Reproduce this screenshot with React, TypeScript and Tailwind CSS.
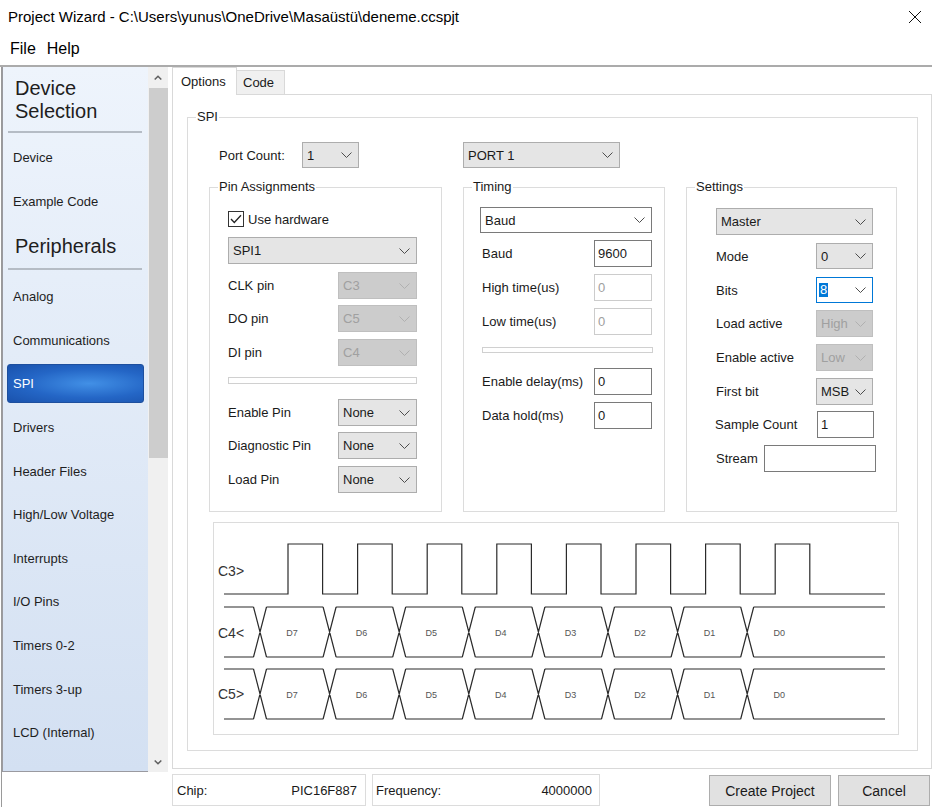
import React from "react";

type SelVariant = "normal" | "disabled" | "white" | "focus";

function Chevron({ light }: { light?: boolean }) {
  return (
    <svg width="11" height="6" viewBox="0 0 11 6" className="shrink-0 block">
      <path d="M0.5 0.5 L5.5 5.5 L10.5 0.5" fill="none" stroke={light ? "#b0b0b0" : "#4d4d4d"} strokeWidth="1" />
    </svg>
  );
}

function Select({ value, className = "", variant = "normal" }: { value: React.ReactNode; className?: string; variant?: SelVariant }) {
  const v =
    variant === "disabled"
      ? "bg-[#cccccc] border-[#bfbfbf] text-[#a0a0a0] pl-[4px]"
      : variant === "white"
      ? "bg-white border-[#7a7a7a] text-[#1a1a1a] pl-[4px]"
      : variant === "focus"
      ? "bg-white border-[#0078d7] text-[#1a1a1a] pl-[2px]"
      : "bg-[#e5e5e5] border-[#adadad] text-[#1a1a1a] pl-[4px]";
  return (
    <div className={`flex items-center justify-between border pr-[6px] text-[13px] leading-none shrink-0 ${v} ${className}`}>
      <span>{value}</span>
      <Chevron light={variant === "disabled"} />
    </div>
  );
}

function Input({ value, className = "", disabled }: { value: string; className?: string; disabled?: boolean }) {
  return (
    <div
      className={`flex items-center border pl-[3px] text-[13px] leading-none shrink-0 bg-white ${
        disabled ? "border-[#cccccc] text-[#a0a0a0]" : "border-[#7a7a7a] text-[#1a1a1a]"
      } ${className}`}
    >
      {value}
    </div>
  );
}

function Group({ label, className = "", children }: { label: string; className?: string; children?: React.ReactNode }) {
  return (
    <div className={`relative border border-[#dcdcdc] shrink-0 ${className}`}>
      <span className="absolute left-[8px] -top-[9px] px-[1px] bg-white text-[13px] leading-[16px] text-[#1a1a1a]">{label}</span>
      {children}
    </div>
  );
}

function Row({ label, labelW, className = "", children }: { label: string; labelW: string; className?: string; children?: React.ReactNode }) {
  return (
    <div className={`flex items-center ${className}`}>
      <span className={`${labelW} text-[13px] leading-none text-[#1a1a1a] shrink-0 whitespace-nowrap`}>{label}</span>
      {children}
    </div>
  );
}

function Waveform() {
  const rises = Array.from({ length: 8 }, (_, k) => 288 + 69.6 * k);
  let clk = "M224 594";
  rises.forEach((r) => {
    clk += ` L${r} 594 L${r} 544 L${r + 34.6} 544 L${r + 34.6} 594`;
  });
  clk += " L885 594";
  const cs = Array.from({ length: 8 }, (_, k) => 260 + 69.6 * k);
  const h = 6.5;
  const bus = (t: number, b: number) => {
    let d = "";
    const xs = [224, ...cs.flatMap((c) => [c - h, c + h]), 885];
    for (let i = 0; i < xs.length; i += 2) {
      d += ` M${xs[i]} ${t} L${xs[i + 1]} ${t} M${xs[i]} ${b} L${xs[i + 1]} ${b}`;
    }
    cs.forEach((c) => {
      d += ` M${c - h} ${t} L${c + h} ${b} M${c - h} ${b} L${c + h} ${t}`;
    });
    return d;
  };
  const names = ["D7", "D6", "D5", "D4", "D3", "D2", "D1", "D0"];
  return (
    <svg width="684" height="211" viewBox="214 523 684 211" className="block">
      <g fontFamily="'Liberation Sans', Arial, sans-serif" fontSize="14" fill="#333">
        <text x="218" y="576">{"C3>"}</text>
        <text x="218" y="638">{"C4<"}</text>
        <text x="218" y="699">{"C5>"}</text>
      </g>
      <path d={clk} fill="none" stroke="#2b2b2b" strokeWidth="1.2" />
      <path d={bus(607, 657)} fill="none" stroke="#2b2b2b" strokeWidth="1.2" />
      <path d={bus(669, 719)} fill="none" stroke="#2b2b2b" strokeWidth="1.2" />
      <g fontFamily="'Liberation Sans', Arial, sans-serif" fontSize="9" fill="#555" textAnchor="middle">
        {cs.map((c, i) => (
          <text key={"a" + i} x={c + 32} y="635.5">
            {names[i]}
          </text>
        ))}
        {cs.map((c, i) => (
          <text key={"b" + i} x={c + 32} y="697.5">
            {names[i]}
          </text>
        ))}
      </g>
    </svg>
  );
}

function SideItem({ text, active }: { text: string; active?: boolean }) {
  return (
    <div className="h-[43.6px] shrink-0">
      {active ? (
        <div className="ml-[4px] w-[137px] h-[39px] rounded-[3px] border border-[#1d4f9e] bg-[radial-gradient(ellipse_at_60%_50%,#4290e6_0%,#2466c6_55%,#1a52ac_100%)] flex items-center pl-[5px] text-white text-[13px]">
          {text}
        </div>
      ) : (
        <div className="h-[40px] flex items-center pl-[10px] text-[13px] text-[#1e1e1e] whitespace-nowrap">{text}</div>
      )}
    </div>
  );
}

export default function App() {
  const items2 = [
    "Analog",
    "Communications",
    "SPI",
    "Drivers",
    "Header Files",
    "High/Low Voltage",
    "Interrupts",
    "I/O Pins",
    "Timers 0-2",
    "Timers 3-up",
    "LCD (Internal)",
    "LCD (External)",
  ];
  return (
    <div className="w-[932px] h-[807px] bg-white overflow-hidden flex flex-col font-['Liberation_Sans',Arial,sans-serif] text-[#1a1a1a]">
      {/* Title bar */}
      <div className="h-[33px] shrink-0 flex items-center pl-[8px] pr-[10px]">
        <span className="text-[15px] leading-none text-black whitespace-nowrap">
          {"Project Wizard - C:\\Users\\yunus\\OneDrive\\Masaüstü\\deneme.ccspjt"}
        </span>
        <svg width="14" height="14" viewBox="0 0 14 14" className="ml-auto block">
          <path d="M1 1 L13 13 M13 1 L1 13" stroke="#111" strokeWidth="1" fill="none" />
        </svg>
      </div>
      {/* Menu */}
      <div className="h-[32px] shrink-0 flex items-center pl-[10px] gap-[11px] text-[16px] leading-none text-black">
        <span>File</span>
        <span>Help</span>
      </div>
      {/* Body */}
      <div className="h-[742px] shrink-0 flex border-t-2 border-[#ababab]">
        {/* Left column */}
        <div className="ml-[1px] w-[171px] shrink-0 border-l border-[#9a9a9a] flex flex-col">
          <div className="h-[705px] flex shrink-0">
            <div className="w-[146px] h-[705px] border-l border-b border-[#9a9aa0] bg-[linear-gradient(to_bottom,#eef4fc,#d3e0f2)] flex flex-col overflow-hidden">
              <div className="pt-[10px] pl-[12px] text-[20px] leading-[22.5px] text-[#1e1e1e] shrink-0">
                Device
                <br />
                Selection
              </div>
              <div className="mt-[9px] ml-[5px] w-[134px] h-[2px] bg-[#b5bcc5] shrink-0" />
              <div className="mt-[5px] flex flex-col shrink-0">
                <SideItem text="Device" />
                <SideItem text="Example Code" />
              </div>
              <div className="mt-[10.3px] pl-[12px] text-[20px] leading-[23px] text-[#1e1e1e] shrink-0">Peripherals</div>
              <div className="mt-[9.5px] ml-[5px] w-[134px] h-[2px] bg-[#b5bcc5] shrink-0" />
              <div className="mt-[7px] flex flex-col shrink-0">
                {items2.map((t) => (
                  <SideItem key={t} text={t} active={t === "SPI"} />
                ))}
              </div>
            </div>
            <div className="w-[20px] h-[705px] bg-[#f0f0f0] flex flex-col shrink-0">
              <div className="h-[21px] flex items-center justify-center shrink-0">
                <svg width="8" height="5" viewBox="0 0 8 5" className="block">
                  <path d="M0.7 4.5 L4 1.2 L7.3 4.5" fill="none" stroke="#606060" strokeWidth="1.5" />
                </svg>
              </div>
              <div className="ml-[1px] w-[19px] h-[370px] bg-[#cdcdcd] shrink-0" />
              <div className="flex-1" />
              <div className="h-[20px] flex items-center justify-center shrink-0">
                <svg width="8" height="5" viewBox="0 0 8 5" className="block">
                  <path d="M0.7 0.5 L4 3.8 L7.3 0.5" fill="none" stroke="#606060" strokeWidth="1.5" />
                </svg>
              </div>
            </div>
          </div>
        </div>
        {/* Main column */}
        <div className="w-[760px] shrink-0 flex flex-col">
          <div className="h-[27px] shrink-0 flex items-end relative z-10">
            <div className="w-[65px] h-[28px] -mb-[1px] bg-white border-t border-l border-r border-[#d9d9d9] flex items-center pl-[8px] text-[13px] leading-none">
              Options
            </div>
            <div className="w-[48px] h-[24px] bg-[#f0f0f0] border-t border-r border-[#d9d9d9] flex items-center pl-[6px] text-[13px] leading-none">
              Code
            </div>
          </div>
          <div className="h-[675px] shrink-0 border border-[#d9d9d9] bg-white">
            <Group label="SPI" className="ml-[14px] mt-[22px] w-[731px] h-[634px]">
              <div className="flex flex-col">
                <div className="flex items-center h-[26px] mt-[24px] ml-[31px]">
                  <span className="w-[83px] text-[13px] leading-none shrink-0">Port Count:</span>
                  <Select value="1" className="w-[57px] h-[26px]" />
                  <Select value="PORT 1" className="w-[157px] h-[26px] ml-[104px]" />
                </div>
                <div className="flex gap-[21px] mt-[19px] ml-[21px]">
                  <Group label="Pin Assignments" className="w-[233px] h-[325px]">
                    <div className="flex flex-col pl-[18px] pt-[23px]">
                      <div className="flex items-center h-[16px]">
                        <div className="w-[16px] h-[16px] border border-[#333] bg-white flex items-center justify-center shrink-0">
                          <svg width="12" height="10" viewBox="0 0 12 10" className="block">
                            <path d="M1 5 L4.3 8.5 L11 1.3" fill="none" stroke="#222" strokeWidth="1.3" />
                          </svg>
                        </div>
                        <span className="ml-[4px] text-[13px] leading-none">Use hardware</span>
                      </div>
                      <Select value="SPI1" className="w-[189px] h-[27px] mt-[10px]" />
                      <Row label="CLK pin" labelW="w-[110px]" className="mt-[8px]">
                        <Select value="C3" variant="disabled" className="w-[79px] h-[27px]" />
                      </Row>
                      <Row label="DO pin" labelW="w-[110px]" className="mt-[6px]">
                        <Select value="C5" variant="disabled" className="w-[79px] h-[27px]" />
                      </Row>
                      <Row label="DI pin" labelW="w-[110px]" className="mt-[7px]">
                        <Select value="C4" variant="disabled" className="w-[79px] h-[27px]" />
                      </Row>
                      <div className="mt-[11px] w-[189px] h-[7px] border border-[#d0d0d0] bg-white" />
                      <Row label="Enable Pin" labelW="w-[110px]" className="mt-[15px]">
                        <Select value="None" className="w-[79px] h-[27px]" />
                      </Row>
                      <Row label="Diagnostic Pin" labelW="w-[110px]" className="mt-[6px]">
                        <Select value="None" className="w-[79px] h-[27px]" />
                      </Row>
                      <Row label="Load Pin" labelW="w-[110px]" className="mt-[7px]">
                        <Select value="None" className="w-[79px] h-[27px]" />
                      </Row>
                    </div>
                  </Group>
                  <Group label="Timing" className="w-[202px] h-[325px]">
                    <div className="flex flex-col pl-[16px] pt-[19px]">
                      <Select value="Baud" variant="white" className="w-[172px] h-[26px]" />
                      <Row label="Baud" labelW="w-[112px]" className="mt-[7px] ml-[2px]">
                        <Input value="9600" className="w-[58px] h-[27px]" />
                      </Row>
                      <Row label="High time(us)" labelW="w-[112px]" className="mt-[7px] ml-[2px]">
                        <Input value="0" disabled className="w-[58px] h-[27px]" />
                      </Row>
                      <Row label="Low time(us)" labelW="w-[112px]" className="mt-[7px] ml-[2px]">
                        <Input value="0" disabled className="w-[58px] h-[27px]" />
                      </Row>
                      <div className="mt-[12px] ml-[2px] w-[171px] h-[6px] border border-[#d0d0d0] bg-white" />
                      <Row label="Enable delay(ms)" labelW="w-[112px]" className="mt-[15px] ml-[2px]">
                        <Input value="0" className="w-[58px] h-[27px]" />
                      </Row>
                      <Row label="Data hold(ms)" labelW="w-[112px]" className="mt-[7px] ml-[2px]">
                        <Input value="0" className="w-[58px] h-[27px]" />
                      </Row>
                    </div>
                  </Group>
                  <Group label="Settings" className="w-[211px] h-[325px]">
                    <div className="flex flex-col pl-[29px] pt-[20px]">
                      <Select value="Master" className="w-[157px] h-[27px]" />
                      <Row label="Mode" labelW="w-[100px]" className="mt-[8px]">
                        <Select value="0" className="w-[57px] h-[26px]" />
                      </Row>
                      <Row label="Bits" labelW="w-[100px]" className="mt-[8px]">
                        <Select
                          value={<span className="bg-[#0078d7] text-white px-[1px] leading-[14px] inline-block">8</span>}
                          variant="focus"
                          className="w-[57px] h-[26px]"
                        />
                      </Row>
                      <Row label="Load active" labelW="w-[100px]" className="mt-[7px]">
                        <Select value="High" variant="disabled" className="w-[57px] h-[27px]" />
                      </Row>
                      <Row label="Enable active" labelW="w-[100px]" className="mt-[7px]">
                        <Select value="Low" variant="disabled" className="w-[57px] h-[27px]" />
                      </Row>
                      <Row label="First bit" labelW="w-[100px]" className="mt-[7px]">
                        <Select value="MSB" className="w-[57px] h-[27px]" />
                      </Row>
                      <Row label="Sample Count" labelW="w-[102px]" className="mt-[6px] -ml-[1px]">
                        <Input value="1" className="w-[57px] h-[27px]" />
                      </Row>
                      <Row label="Stream" labelW="w-[48px]" className="mt-[7px]">
                        <Input value="" className="w-[112px] h-[27px]" />
                      </Row>
                    </div>
                  </Group>
                </div>
                <div className="mt-[10px] ml-[25px] w-[686px] h-[213px] border border-[#dcdcdc] bg-white">
                  <Waveform />
                </div>
              </div>
            </Group>
          </div>
          {/* Bottom bar */}
          <div className="h-[38px] shrink-0 flex items-start pt-[5px] text-[13px] leading-none text-[#1a1a1a]">
            <div className="w-[194px] h-[32px] border border-[#dcdcdc] flex items-center justify-between pl-[4px] pr-[8px] shrink-0">
              <span>Chip:</span>
              <span>PIC16F887</span>
            </div>
            <div className="ml-[6px] w-[228px] h-[32px] border border-[#dcdcdc] flex items-center justify-between pl-[3px] pr-[7px] shrink-0">
              <span>Frequency:</span>
              <span>4000000</span>
            </div>
            <button className="ml-[109px] mt-[1px] w-[122px] h-[31px] bg-[#e1e1e1] border border-[#adadad] text-[14px] leading-none text-[#1a1a1a] shrink-0">
              Create Project
            </button>
            <button className="ml-[7px] mt-[1px] w-[92px] h-[31px] bg-[#e1e1e1] border border-[#adadad] text-[14px] leading-none text-[#1a1a1a] shrink-0">
              Cancel
            </button>
          </div>
        </div>
      </div>
    </div>
  );
}
